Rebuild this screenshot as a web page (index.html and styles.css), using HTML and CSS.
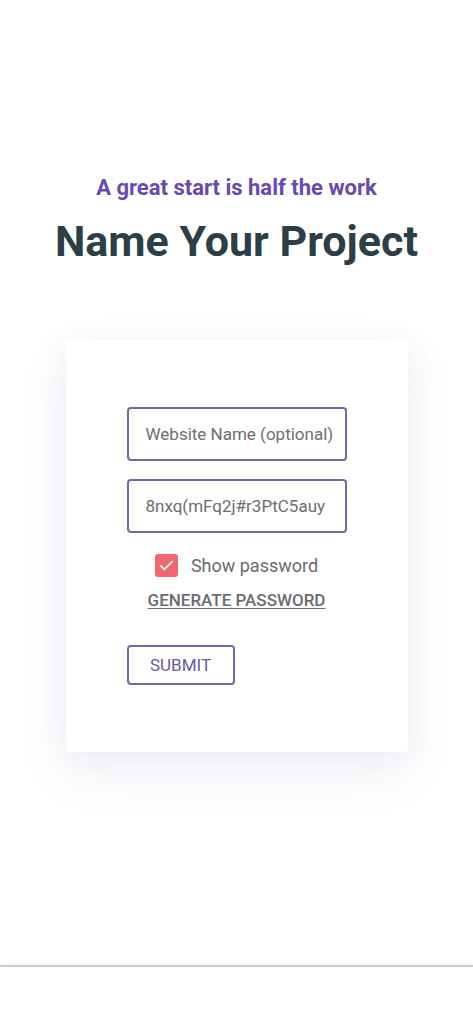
FILE: index.html
```html
<!DOCTYPE html>
<html lang="en">
<head>
<meta charset="utf-8">
<title>Name Your Project</title>
<link rel="stylesheet" href="styles.css">
</head>
<body>
<main class="page">
  <header class="hero">
    <p class="tagline">A great start is half the work</p>
    <h1 class="title">Name Your Project</h1>
  </header>
  <section class="card">
    <form class="form">
      <div class="field"><span class="placeholder">Website Name (optional)</span></div>
      <div class="field"><span class="value">8nxq(mFq2j#r3PtC5auy</span></div>
      <label class="check-row">
        <span class="checkbox">
          <svg viewBox="0 0 24 24" width="21" height="21"><path d="M5.5 12.5l4 4L18.5 7.5" fill="none" stroke="#fff" stroke-width="2" stroke-linecap="round" stroke-linejoin="round"/></svg>
        </span>
        <span class="check-label">Show password</span>
      </label>
      <a class="generate">GENERATE PASSWORD</a>
      <button type="button" class="submit">SUBMIT</button>
    </form>
  </section>
  <div class="spacer"></div>
  <div class="bottom-line"></div>
</main>
</body>
</html>
```

FILE: styles.css
```css
html, body {
  margin: 0;
  padding: 0;
  background: #fff;
}
body {
  font-family: Roboto, "Liberation Sans", sans-serif;
  width: 473px;
  height: 1024px;
  overflow: hidden;
}
.page {
  display: flex;
  flex-direction: column;
  align-items: center;
  height: 1024px;
}
.hero {
  padding-top: 174px;
  text-align: center;
}
.tagline {
  margin: 0;
  color: #6a48b2;
  font-size: 22px;
  font-weight: 700;
  line-height: 28px;
}
.title {
  margin: 14px 0 0;
  color: #2c3e48;
  font-size: 43px;
  font-weight: 700;
  line-height: 50px;
}
.card {
  margin-top: 74px;
  width: 342px;
  height: 412px;
  background: #fff;
  border-radius: 4px;
  box-shadow: 0 20px 50px rgba(90, 80, 160, 0.09), 0 0 30px rgba(90, 80, 160, 0.05);
  box-sizing: border-box;
  padding: 67px 61px 0;
}
.form {
  display: flex;
  flex-direction: column;
}
.field {
  width: 220px;
  height: 54px;
  box-sizing: border-box;
  border: 2px solid #7764ab;
  border-radius: 4px;
  display: flex;
  align-items: center;
  padding: 0 16px 0 17px;
  overflow: hidden;
  white-space: nowrap;
  margin-bottom: 18px;
  font-size: 17px;
  color: #6e6e6e;
}
.check-row {
  display: flex;
  align-items: center;
  justify-content: center;
  gap: 13px;
  height: 24px;
  margin-top: 2px;
}
.checkbox {
  width: 23px;
  height: 23px;
  border-radius: 3px;
  background: #f1676b;
  display: flex;
  align-items: center;
  justify-content: center;
}
.check-label {
  font-size: 18px;
  color: #6b6b6b;
}
.generate {
  margin-top: 13px;
  align-self: center;
  font-size: 17px;
  line-height: 20px;
  font-weight: 500;
  color: #6a6d70;
  text-decoration: underline;
  text-underline-offset: 2px;
}
.submit {
  margin-top: 35px;
  align-self: flex-start;
  width: 108px;
  height: 40px;
  background: #fff;
  border: 2px solid #7764ab;
  border-radius: 4px;
  color: #6a5a9f;
  font-family: Roboto, "Liberation Sans", sans-serif;
  font-size: 17px;
  padding: 0;
}
.spacer { flex: 1; }
.bottom-line {
  width: 100%;
  height: 2px;
  background: #cfcfcf;
  box-shadow: 0 -1px 3px rgba(0,0,0,0.08);
  margin-bottom: 57px;
}
```
